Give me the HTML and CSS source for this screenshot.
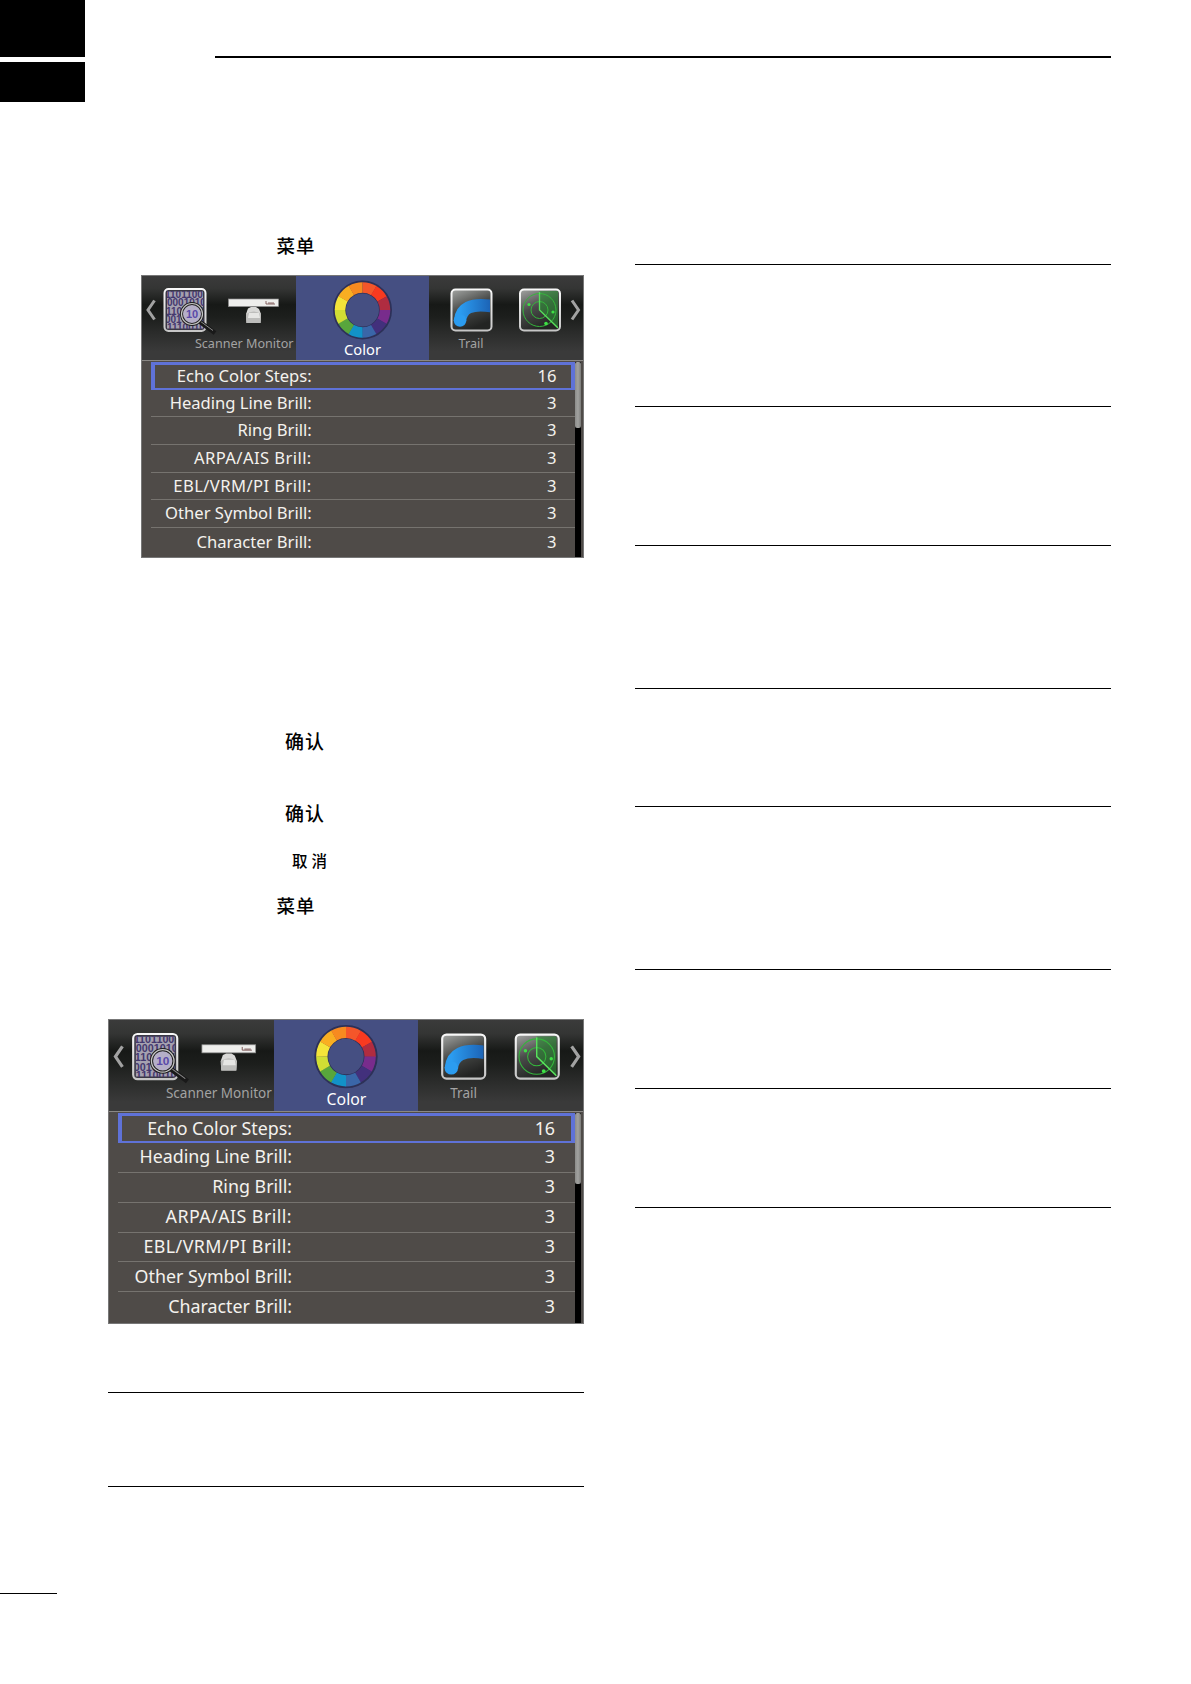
FILE: index.html
```
<!DOCTYPE html>
<html lang="zh-CN">
<head>
    <meta charset="UTF-8">
    <meta name="viewport" content="width=device-width, initial-scale=1.0">
    <title>Color</title>
    <link rel="stylesheet" href="styles.css">
</head>
<body>
	<!-- shared icons -->
	<svg class="defs" width="0" height="0">
		<defs>
			<linearGradient id="glass" x1="0" y1="0" x2="0.4" y2="1">
				<stop offset="0" stop-color="#a4a6a4"/>
				<stop offset="0.5" stop-color="#4a4c4a"/>
				<stop offset="1" stop-color="#232423"/>
			</linearGradient>
			<linearGradient id="frame" x1="0" y1="0" x2="0" y2="1">
				<stop offset="0" stop-color="#f8f8f8"/>
				<stop offset="1" stop-color="#c6c6c6"/>
			</linearGradient>
			<linearGradient id="sea" x1="0" y1="0" x2="1" y2="0">
				<stop offset="0" stop-color="#2b9cf0"/>
				<stop offset="1" stop-color="#1c62b4"/>
			</linearGradient>
			<clipPath id="clip-binary"><rect x="25" y="16" width="37" height="38"/></clipPath>
			<clipPath id="clip-trail"><rect x="24" y="16" width="37" height="38"/></clipPath>
			<clipPath id="clip-radar"><rect x="92" y="16" width="37" height="38"/></clipPath>

			<symbol id="icons-left" viewBox="0 0 154 65">
				<path d="M12.500 25.500 L6 35 L12.500 44.500" fill="none" stroke="#a2a2a2" stroke-width="3"/>
				<rect x="22.500" y="14" width="41" height="42" rx="4" fill="#3a3845" stroke="url(#frame)" stroke-width="2"/>
				<rect x="25" y="16.500" width="36" height="37" fill="#a5a1b0"/>
				<g class="bits" clip-path="url(#clip-binary)">
					<text x="23" y="22.500">1101100</text>
					<text x="25" y="31">0001010</text>
					<text x="24" y="39.500">1100101</text>
					<text x="23" y="48">0010110</text>
					<text x="25" y="56">1110010</text>
				</g>
				<path d="M58 47 L73 58" stroke="#191919" stroke-width="4.500"/>
				<path d="M58 46 L71 55.500" stroke="#8a8a8a" stroke-width="1"/>
				<circle cx="50" cy="39" r="10.500" fill="#b5afc8" stroke="#1f1f1f" stroke-width="3"/>
				<circle cx="50" cy="39" r="10.500" fill="none" stroke="#c4c4c4" stroke-width="1.200"/>
				<text class="lens" x="50" y="43" text-anchor="middle">10</text>
				<rect x="86.500" y="24" width="50" height="7.500" fill="#eeeeec" stroke="#8e8e8e" stroke-width="0.700"/>
				<path d="M124 26 V29 H133 M126 28 H132" stroke="#7a5555" stroke-width="0.900" fill="none"/>
				<path d="M106 33.500 L109 32 H114 L117 34 L119 39 L118.500 48 H104.500 L104 39 Z" fill="#d9d9d7"/>
				<path d="M104 39 Q111.500 34 119 39 L118.500 48 H104.500 Z" fill="#bdbdbb"/>
				<path d="M107 38 H117 L118 43 H106 Z" fill="#e6e6e4"/>
			</symbol>

			<symbol id="icons-wheel" viewBox="0 0 133 65">
				<circle cx="66.500" cy="35" r="23" fill="none" stroke="#2d3158" stroke-width="13"/>
				<g fill="none" stroke-width="10.500" transform="rotate(-90 66.500 35)">
					<circle cx="66.500" cy="35" r="22.500" pathLength="12" stroke="#f4562a" stroke-dasharray="1.020 12"/>
					<circle cx="66.500" cy="35" r="22.500" pathLength="12" stroke="#f83a20" stroke-dasharray="0 1 1.020 12"/>
					<circle cx="66.500" cy="35" r="22.500" pathLength="12" stroke="#b02c40" stroke-dasharray="0 2 1.020 12"/>
					<circle cx="66.500" cy="35" r="22.500" pathLength="12" stroke="#782c8c" stroke-dasharray="0 3 1.020 12"/>
					<circle cx="66.500" cy="35" r="22.500" pathLength="12" stroke="#42307c" stroke-dasharray="0 4 1.020 12"/>
					<circle cx="66.500" cy="35" r="22.500" pathLength="12" stroke="#3a66a8" stroke-dasharray="0 5 1.020 12"/>
					<circle cx="66.500" cy="35" r="22.500" pathLength="12" stroke="#1292c8" stroke-dasharray="0 6 1.020 12"/>
					<circle cx="66.500" cy="35" r="22.500" pathLength="12" stroke="#58a63c" stroke-dasharray="0 7 1.020 12"/>
					<circle cx="66.500" cy="35" r="22.500" pathLength="12" stroke="#d0de34" stroke-dasharray="0 8 1.020 12"/>
					<circle cx="66.500" cy="35" r="22.500" pathLength="12" stroke="#f4e43a" stroke-dasharray="0 9 1.020 12"/>
					<circle cx="66.500" cy="35" r="22.500" pathLength="12" stroke="#f9ae22" stroke-dasharray="0 10 1.020 12"/>
					<circle cx="66.500" cy="35" r="22.500" pathLength="12" stroke="#f78a20" stroke-dasharray="0 11 1 12"/>
				</g>
			</symbol>

			<symbol id="icons-right" viewBox="0 0 154 65">
				<rect x="22.500" y="14.500" width="40" height="41" rx="4" fill="url(#glass)" stroke="url(#frame)" stroke-width="2"/>
				<path d="M31 46 C32 33 42 28 62 31" fill="none" stroke="url(#sea)" stroke-width="12.500" clip-path="url(#clip-trail)"/>
				<circle cx="31" cy="45.500" r="6.250" fill="#2b9cf0" clip-path="url(#clip-trail)"/>
				<rect x="91" y="14.500" width="40" height="41" rx="4" fill="url(#glass)" stroke="url(#frame)" stroke-width="2"/>
				<g clip-path="url(#clip-radar)">
					<path d="M110.500 35 V16 H129 V53 Z" fill="#2b8a33" opacity="0.600"/>
					<g fill="none" stroke="#35b53c" stroke-width="1">
						<circle cx="110.500" cy="35" r="16.500"/>
						<circle cx="110.500" cy="35" r="8.500"/>
						<path d="M110.500 17 V35 L129 53" stroke="#58e05c" stroke-width="1.300"/>
					</g>
					<circle cx="100" cy="29.500" r="1.600" fill="#3fe046"/>
					<circle cx="124" cy="37" r="1.600" fill="#3fe046"/>
					<circle cx="117" cy="48.500" r="1.800" fill="#3fe046"/>
				</g>
				<path d="M143 25.500 L149.500 35 L143 44.500" fill="none" stroke="#a2a2a2" stroke-width="3"/>
			</symbol>
		</defs>
	</svg>

	<header class="header">
		<div class="corner">
			<div class="corner-top"></div>
			<div class="corner-bottom"></div>
		</div>
		<div class="header-line"></div>
	</header>

	<main class="container">
		<div class="column">
			<p class="key key-menu first">菜单</p>

			<div class="panel small">
				<div class="tabs">
					<div class="tab side-left"><svg><use href="#icons-left"/></svg><span>Scanner Monitor</span></div>
					<div class="tab active"><svg><use href="#icons-wheel"/></svg><span>Color</span></div>
					<div class="tab side-right"><svg><use href="#icons-right"/></svg><span>Trail</span></div>
				</div>
				<div class="body">
					<div class="list">
						<div class="row selected"><label>Echo Color Steps:</label><b>16</b></div>
						<div class="row"><label>Heading Line Brill:</label><b>3</b></div>
						<div class="row"><label>Ring Brill:</label><b>3</b></div>
						<div class="row"><label class="caps">ARPA/AIS Brill:</label><b>3</b></div>
						<div class="row"><label class="caps">EBL/VRM/PI Brill:</label><b>3</b></div>
						<div class="row"><label>Other Symbol Brill:</label><b>3</b></div>
						<div class="row"><label>Character Brill:</label><b>3</b></div>
					</div>
					<div class="scroll"><div class="thumb"></div></div>
				</div>
			</div>

			<p class="key key-enter one">确认</p>
			<p class="key key-enter two">确认</p>
			<p class="key key-clear">取消</p>
			<p class="key key-menu last">菜单</p>

			<div class="panel large">
				<div class="tabs">
					<div class="tab side-left"><svg><use href="#icons-left"/></svg><span>Scanner Monitor</span></div>
					<div class="tab active"><svg><use href="#icons-wheel"/></svg><span>Color</span></div>
					<div class="tab side-right"><svg><use href="#icons-right"/></svg><span>Trail</span></div>
				</div>
				<div class="body">
					<div class="list">
						<div class="row selected"><label>Echo Color Steps:</label><b>16</b></div>
						<div class="row"><label>Heading Line Brill:</label><b>3</b></div>
						<div class="row"><label>Ring Brill:</label><b>3</b></div>
						<div class="row"><label class="caps">ARPA/AIS Brill:</label><b>3</b></div>
						<div class="row"><label class="caps">EBL/VRM/PI Brill:</label><b>3</b></div>
						<div class="row"><label>Other Symbol Brill:</label><b>3</b></div>
						<div class="row"><label>Character Brill:</label><b>3</b></div>
					</div>
					<div class="scroll"><div class="thumb"></div></div>
				</div>
			</div>

			<section class="block l1"></section>
			<section class="block l2"></section>
		</div>

		<div class="column">
			<section class="block r1"></section>
			<section class="block r2"></section>
			<section class="block r3"></section>
			<section class="block r4"></section>
			<section class="block r5"></section>
			<section class="block r6"></section>
			<section class="block r7"></section>
			<section class="block r8"></section>
		</div>
	</main>

	<footer class="footer"></footer>
</body>
</html>
```
FILE: styles.css
```
* {
	box-sizing: border-box;
}

body {
	margin: 0;
	background-color: white;
	color: black;
	font-family: "Noto Sans", "Noto Sans CJK SC", sans-serif;
}

.defs {
	display: block;
}

/* top of the page */
.header {
	display: flex;
	height: 102px;
}

.corner {
	display: flex;
	flex-direction: column;
	gap: 5px;
	width: 85px;
}

.corner-top {
	height: 57px;
	background-color: black;
}

.corner-bottom {
	height: 40px;
	background-color: black;
}

.header-line {
	width: 896px;
	height: 2px;
	margin: 56px 0 0 130px;
	background-color: black;
}

.container {
	display: grid;
	grid-template-columns: 476px 476px;
	column-gap: 51px;
	height: 1491px;
	padding-left: 108px;
}

.column {
	display: flex;
	flex-direction: column;
}

.block {
	flex: none;
	border-bottom: solid black 1px;
}

.l1 { height: 69px; }
.l2 { height: 94px; }
.r1 { height: 163px; }
.r2 { height: 142px; }
.r3 { height: 139px; }
.r4 { height: 143px; }
.r5 { height: 118px; }
.r6 { height: 163px; }
.r7 { height: 119px; }
.r8 { height: 119px; }

/* key names */
.key {
	flex: none;
	height: 24px;
	margin: 0;
	font-family: "Noto Sans CJK SC", sans-serif;
	font-weight: 500;
	font-size: 18.5px;
	line-height: 22px;
	letter-spacing: 1px;
}

.key-menu {
	padding-left: 168.5px;
}

.key-enter {
	padding-left: 177px;
	font-size: 19px;
}

.key-clear {
	margin-top: 23px;
	padding-left: 184px;
	font-size: 15.5px;
	letter-spacing: 4px;
}

.first { margin-top: 132px; }
.one { margin-top: 172px; }
.two { margin-top: 48px; }
.last { margin-top: 21px; }

/* menu screen, sized in em so both copies share the rules */
.panel {
	flex: none;
	display: flex;
	flex-direction: column;
	border: solid #777 1px;
	background-color: #4f4b48;
	overflow: hidden;
}

.panel.small {
	width: 443px;
	height: 283px;
	margin: 17px 0 0 33px;
	font-size: 10px;
	--head: 85px;
	--row: 27.7px;
}

.panel.large {
	width: 476px;
	height: 305px;
	margin-top: 101px;
	font-size: 10.745px;
	--head: 92px;
	--row: 29.9px;
}

.tabs {
	flex: none;
	display: flex;
	height: var(--head);
	border-bottom: solid #8a8885 1px;
	background: linear-gradient(#3b3b3b 0%, #343534 15%, #171917 34%, #1c1e1c 48%, #2b2c2b 68%, #3a3a3a 90%);
}

.tab {
	flex: none;
	width: 15.4em;
	color: #a3a3a3;
}

.tab svg {
	display: block;
	width: 100%;
	height: 6.5em;
	margin-top: -0.1em;
}

.tab span {
	display: block;
	margin-top: -0.37em;
	font-size: 1.26em;
	line-height: 1.4em;
	white-space: nowrap;
}

.side-left span {
	text-align: right;
	padding-right: 0.2em;
}

.side-right span {
	padding-left: 2.35em;
}

.tab.active {
	width: 13.3em;
	background-color: #454f82;
	color: white;
}

.tab.active span {
	margin-top: -0.05em;
	font-size: 1.47em;
	text-align: center;
}

.large .tab.active {
	width: 13.4em;
}

.bits {
	font: bold 10px "Liberation Sans", sans-serif;
	fill: #44386e;
}

.lens {
	font: bold 11px "Liberation Sans", sans-serif;
	fill: #5a4aa8;
}

.body {
	flex: 1;
	display: flex;
	padding: 1px 2px 0 9px;
}

.list {
	flex: 1;
}

.row {
	display: flex;
	align-items: center;
	height: var(--row);
	border-bottom: solid #76736f 1px;
	color: #f4f2ee;
}

.row label {
	width: 9.68em;
	font-size: 1.66em;
	line-height: 1;
	text-align: right;
	white-space: nowrap;
}

.row label.caps {
	letter-spacing: 0.025em;
}

.row b {
	flex: 1;
	padding-right: 1.12em;
	font-size: 1.66em;
	font-weight: normal;
	line-height: 1;
	text-align: right;
}

.row.selected {
	border: solid #5f72d8;
	border-width: 3px 4px 2px 4px;
}

.row.selected label {
	margin-left: -4px;
}

.row.selected b {
	margin-right: -4px;
}

.row:last-child {
	border-bottom: none;
}

.large .row label {
	width: 9.76em;
}

.scroll {
	width: 6px;
	background-color: black;
}

.thumb {
	height: 6.6em;
	border-radius: 2px;
	background: linear-gradient(90deg, #8c8c8a, #a2a2a0, #7c7c7a);
}

.footer {
	width: 57px;
	height: 1px;
	background-color: black;
}
```
